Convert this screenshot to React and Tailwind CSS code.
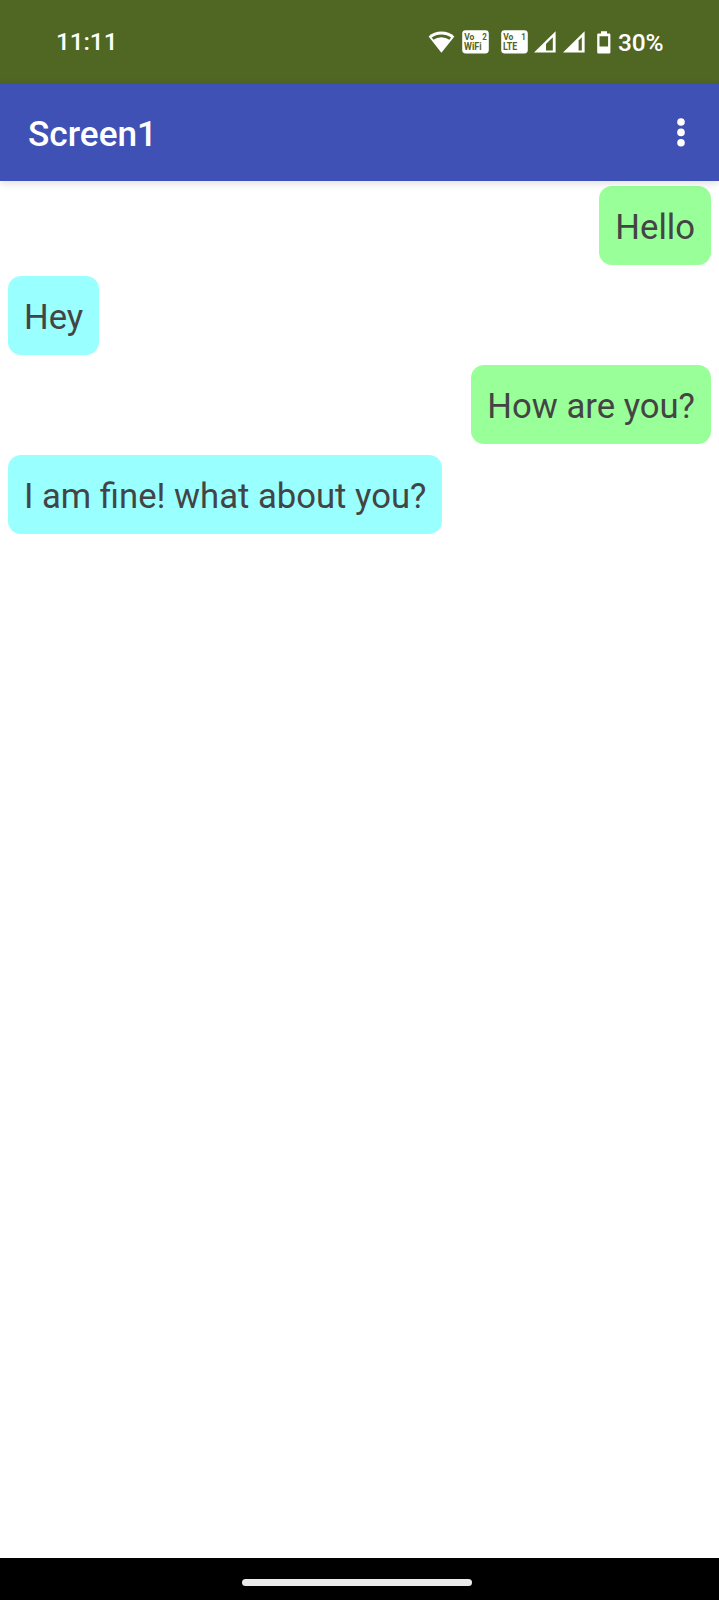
import React from 'react'

// ── Data ────────────────────────────────────────────────────────────────────

const MESSAGES = [
  { id: 1, text: 'Hello', sent: true },
  { id: 2, text: 'Hey', sent: false },
  { id: 3, text: 'How are you?', sent: true },
  { id: 4, text: 'I am fine! what about you?', sent: false },
]

// ── Icons ───────────────────────────────────────────────────────────────────

function WifiIcon() {
  return (
    <svg width="27" height="22" viewBox="0 0 27 22" className="shrink-0">
      <path d="M13.4 0.6C8.4 0.6 4 2.4 0.6 5.6L13.4 21.8L26.4 5.6C23 2.4 18.4 0.6 13.4 0.6Z" fill="#fff" />
      <path d="M4.6 7.6C9.6 3.9 17.2 3.9 22.2 7.6" fill="none" stroke="#506623" strokeWidth="2.8" />
    </svg>
  )
}

function VoBadge({ sim, label, width }) {
  return (
    <svg width="27" height="24" viewBox="0 0 27 24" className="shrink-0 font-[Roboto,sans-serif] font-bold tracking-normal">
      <rect x="0.2" y="0.2" width="26.6" height="23.2" rx="3.4" fill="#fff" />
      <g fill="#506623">
        <text x="2.2" y="10.3" fontSize="9.6" textLength="10.2" lengthAdjust="spacingAndGlyphs">Vo</text>
        <text x="20.2" y="10.3" fontSize="9.6" textLength="4.6" lengthAdjust="spacingAndGlyphs">{sim}</text>
        <text x="2" y="20.2" fontSize="10.8" textLength={width} lengthAdjust="spacingAndGlyphs">{label}</text>
      </g>
    </svg>
  )
}

// The cut-out is the part of the signal that is missing
function SignalIcon({ weak }) {
  return (
    <svg width="22" height="22" viewBox="0 0 22 22" className="shrink-0">
      <path d="M21.6 0.2V21.6H0Z" fill="#fff" />
      <path d={weak ? 'M18.8 6.2V19.4H12V13Z' : 'M18.8 6.2V19.4H15.6V9.4Z'} fill="#506623" />
    </svg>
  )
}

function BatteryIcon() {
  return (
    <svg width="14" height="23" viewBox="0 0 14 23" className="shrink-0">
      <path
        fillRule="evenodd"
        d="M4 0.2H10V2.4H12.2Q13.4 2.4 13.4 3.6V21.2Q13.4 22.4 12.2 22.4H1.4Q0.2 22.4 0.2 21.2V3.6Q0.2 2.4 1.4 2.4H4ZM2.5 5.2V15.4H11.1V5.2Z"
        fill="#fff"
      />
    </svg>
  )
}

function MoreIcon() {
  return (
    <svg width="8" height="29" viewBox="0 0 8 29" fill="#fff">
      <circle cx="4" cy="4" r="3.8" />
      <circle cx="4" cy="14.4" r="3.8" />
      <circle cx="4" cy="24.8" r="3.8" />
    </svg>
  )
}

// ── Layout pieces ───────────────────────────────────────────────────────────

function StatusBar() {
  return (
    <div className="flex h-[84px] shrink-0 items-center justify-between bg-[#506623] pl-[56px] pr-[55px] text-[24.5px] leading-[24px] font-medium tracking-[-0.15px] text-white">
      <span>11:11</span>
      <div className="flex items-center">
        <WifiIcon />
        <div className="ml-[7px] flex gap-3">
          <VoBadge sim="2" label="WiFi" width="17.6" />
          <VoBadge sim="1" label="LTE" width="14.2" />
        </div>
        <div className="ml-[6px] flex gap-[7px]">
          <SignalIcon weak />
          <SignalIcon />
        </div>
        <div className="ml-3 flex items-center gap-[7px]">
          <BatteryIcon />
          <span className="w-[46px] pt-0.5">30%</span>
        </div>
      </div>
    </div>
  )
}

function AppBar() {
  return (
    <header className="z-10 flex h-[97px] shrink-0 items-center justify-between bg-[#3f51b5] pl-7 pr-[34px] shadow-[0_2px_8px_rgba(0,0,0,0.14)]">
      <h1 className="pt-1 text-[35.2px] font-medium leading-none text-white">Screen1</h1>
      <button type="button" aria-label="More options">
        <MoreIcon />
      </button>
    </header>
  )
}

function Bubble({ text, sent }) {
  return (
    <div
      className={`flex h-[79px] items-center rounded-[13px] px-4 pt-1 text-[34.65px] leading-[35px] text-[#444444]
                  ${sent ? 'self-end bg-[#99ff99]' : 'self-start bg-[#99ffff]'}`}
    >
      {text}
    </div>
  )
}

// ── App ─────────────────────────────────────────────────────────────────────

export default function App() {
  return (
    <div className="flex h-[1600px] w-[719px] flex-col overflow-hidden bg-white font-[Roboto,sans-serif]">
      <StatusBar />
      <AppBar />

      <main className="flex flex-1 flex-col gap-[10.6px] px-2 pt-[5px]">
        {MESSAGES.map(m => (
          <Bubble key={m.id} text={m.text} sent={m.sent} />
        ))}
      </main>

      {/* Gesture navigation handle */}
      <div className="flex h-[42px] shrink-0 justify-center bg-black pt-[21px]">
        <div className="mr-[5px] h-[7px] w-[230px] rounded-full bg-[#ebebeb]" />
      </div>
    </div>
  )
}
